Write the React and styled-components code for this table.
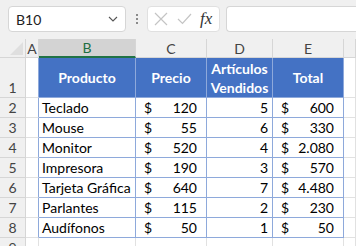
import React from "react";
import styled, { createGlobalStyle } from "styled-components";

const rows = [
  { name: "Teclado", price: 120, qty: 5, total: "600" },
  { name: "Mouse", price: 55, qty: 6, total: "330" },
  { name: "Monitor", price: 520, qty: 4, total: "2.080" },
  { name: "Impresora", price: 190, qty: 3, total: "570" },
  { name: "Tarjeta Gráfica", price: 640, qty: 7, total: "4.480" },
  { name: "Parlantes", price: 115, qty: 2, total: "230" },
  { name: "Audífonos", price: 50, qty: 1, total: "50" },
];

const columns = ["A", "B", "C", "D", "E", ""];

const App = () => {
  return (
    <>
      <GlobalStyle />
      <Sheet>
        <TopBar>
          <NameBox>
            <span>B10</span>
            <svg width="10" height="6" viewBox="0 0 10 6">
              <path d="M1 1 L5 5 L9 1" fill="none" stroke="#555" strokeWidth="1.1" />
            </svg>
          </NameBox>
          <Dots>
            <i />
            <i />
            <i />
          </Dots>
          <ButtonBox>
            <svg width="14" height="14" viewBox="0 0 14 14">
              <path d="M1 1 L13 13 M13 1 L1 13" stroke="#c4c4c4" strokeWidth="1.2" />
            </svg>
            <svg width="15" height="12" viewBox="0 0 15 12">
              <path d="M1 6 L5.5 10.5 L14 1" fill="none" stroke="#c4c4c4" strokeWidth="1.2" />
            </svg>
            <Fx>fx</Fx>
          </ButtonBox>
          <FormulaBox />
        </TopBar>

        <Grid>
          <Corner />
          {columns.map((c, i) => (
            <ColHead key={i} selected={c === "B"}>
              {c}
            </ColHead>
          ))}

          <RowHead tall>1</RowHead>
          <Cell edge />
          <HeadCell>Producto</HeadCell>
          <HeadCell>Precio</HeadCell>
          <HeadCell>
            Artículos
            <br />
            Vendidos
          </HeadCell>
          <HeadCell>Total</HeadCell>
          <Cell />

          {rows.map((r, i) => (
            <React.Fragment key={r.name}>
              <RowHead>{i + 2}</RowHead>
              <Cell edge />
              <DataCell>{r.name}</DataCell>
              <DataCell money>
                <span>$</span>
                <span>{r.price}</span>
              </DataCell>
              <DataCell right>{r.qty}</DataCell>
              <DataCell money>
                <span>$</span>
                <span>{r.total}</span>
              </DataCell>
              <Cell />
            </React.Fragment>
          ))}

          <RowHead>9</RowHead>
          <Cell />
          <Cell />
          <Cell />
          <Cell />
          <Cell />
          <Cell />
        </Grid>
      </Sheet>
    </>
  );
};

export default App;

const GlobalStyle = createGlobalStyle`
  body {
    margin: 0;
    background: #ffffff;
    overflow: hidden;
    font-family: "Lato", "Liberation Sans", sans-serif;
  }
`;

const Sheet = styled.div`
  width: 356px;
  height: 246px;
  overflow: hidden;
`;

const TopBar = styled.div`
  height: 39px;
  background: #f0f0f0;
  display: flex;
  align-items: flex-start;
  padding: 6px 0 0 8px;
  box-sizing: border-box;
`;

const NameBox = styled.div`
  width: 118px;
  height: 26px;
  box-sizing: border-box;
  background: #fff;
  border: 1px solid #d6d6d6;
  border-radius: 4px;
  display: flex;
  align-items: center;
  justify-content: space-between;
  padding: 0 7px 0 7px;
  font-size: 14px;
  color: #222;
`;

const Dots = styled.div`
  width: 21px;
  height: 26px;
  display: flex;
  flex-direction: column;
  align-items: center;
  justify-content: center;
  gap: 2px;
  i {
    width: 2px;
    height: 2px;
    background: #8a8a8a;
  }
`;

const ButtonBox = styled.div`
  width: 73px;
  height: 26px;
  box-sizing: border-box;
  background: #fff;
  border: 1px solid #e0e0e0;
  border-radius: 4px;
  display: flex;
  align-items: center;
  gap: 9px;
  padding-left: 6px;
`;

const Fx = styled.span`
  font-family: "Liberation Serif", serif;
  font-style: italic;
  font-size: 17px;
  color: #333;
  margin-left: -1px;
`;

const FormulaBox = styled.div`
  margin-left: 6px;
  flex: 1;
  height: 26px;
  box-sizing: border-box;
  background: #fff;
  border: 1px solid #d6d6d6;
  border-right: none;
  border-radius: 4px 0 0 4px;
`;

const Grid = styled.div`
  display: grid;
  grid-template-columns: 26px 13px 97px 71px 66px 71px 1fr;
  grid-template-rows: 19px 40px repeat(8, 20px);
  font-size: 14px;
  color: #000;
`;

const Corner = styled.div`
  background: #f0f0f0;
  border-right: 1px solid #d6d6d6;
  border-bottom: 1px solid #d6d6d6;
  position: relative;
  &::after {
    content: "";
    position: absolute;
    right: 2px;
    bottom: 2px;
    border-style: solid;
    border-width: 0 0 13px 13px;
    border-color: transparent transparent #dfdfdf transparent;
  }
`;

const ColHead = styled.div`
  background: ${(p) => (p.selected ? "#d3d3d3" : "#f0f0f0")};
  color: ${(p) => (p.selected ? "#1e6e42" : "#444")};
  border-right: 1px solid #d6d6d6;
  border-bottom: ${(p) => (p.selected ? "2px solid #217346" : "1px solid #d6d6d6")};
  box-sizing: border-box;
  display: flex;
  align-items: center;
  justify-content: center;
  font-size: 14px;
`;

const RowHead = styled.div`
  background: #f0f0f0;
  color: #444;
  border-right: 1px solid #d6d6d6;
  border-bottom: 1px solid #d6d6d6;
  box-sizing: border-box;
  display: flex;
  align-items: ${(p) => (p.tall ? "flex-end" : "center")};
  padding-bottom: ${(p) => (p.tall ? "1px" : "0")};
  justify-content: center;
  font-size: 14px;
`;

const Cell = styled.div`
  box-sizing: border-box;
  border-right: 1px solid ${(p) => (p.edge ? "#8ea9db" : "#e1e1e1")};
  border-bottom: 1px solid #e1e1e1;
`;

const HeadCell = styled.div`
  box-sizing: border-box;
  background: #4472c4;
  color: #fff;
  font-weight: bold;
  border-right: 1px solid #8ea9db;
  border-bottom: 1px solid #8ea9db;
  display: flex;
  align-items: center;
  justify-content: center;
  text-align: center;
  line-height: 19px;
  font-size: 14px;
`;

const DataCell = styled.div`
  box-sizing: border-box;
  border-right: 1px solid #8ea9db;
  border-bottom: 1px solid #8ea9db;
  display: flex;
  align-items: center;
  justify-content: ${(p) => (p.money ? "space-between" : p.right ? "flex-end" : "flex-start")};
  padding: ${(p) => (p.money ? "0 9px 0 8px" : p.right ? "0 4px 0 0" : "0 0 0 3px")};
  white-space: nowrap;
`;
